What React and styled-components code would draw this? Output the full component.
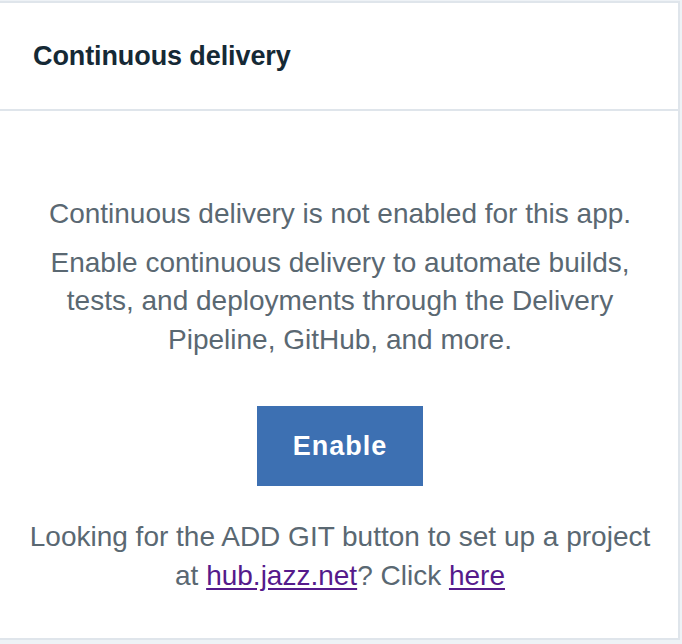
import React from 'react';
import styled, { createGlobalStyle } from 'styled-components';

const GlobalStyle = createGlobalStyle`
  html, body {
    margin: 0;
    padding: 0;
    background: #eef2f6;
  }
  body {
    font-family: "Liberation Sans", Arial, sans-serif;
    -webkit-font-smoothing: antialiased;
  }
`;

const Card = styled.section`
  box-sizing: border-box;
  width: 682px;
  margin: 1px 0 0 -2px;
  background: #fff;
  border: 2px solid #dfe5eb;
  height: 639px;
  display: flex;
  flex-direction: column;
`;

const Header = styled.header`
  box-sizing: border-box;
  height: 108px;
  display: flex;
  align-items: center;
  padding: 0 0 0 33px;
  border-bottom: 2px solid #dfe5eb;

  h2 {
    margin: 0;
    font-size: 27px;
    font-weight: 700;
    color: #152935;
    letter-spacing: -0.1px;
  }
`;

const Body = styled.div`
  padding: 84px 18px 0 20px;
  display: flex;
  flex-direction: column;
  align-items: center;
  text-align: center;
`;

const Text = styled.p`
  margin: ${({ $gap }) => $gap || 0} 0 0;
  font-size: 28px;
  line-height: 38.5px;
  color: #5a6872;
  max-width: ${({ $max }) => $max || '620px'};

  a {
    color: #551a8b;
    text-decoration: underline;
    text-underline-offset: 3px;
  }
`;

const Button = styled.button`
  margin: 47px 0 32px;
  width: 166px;
  height: 80px;
  border: none;
  background: #3d70b2;
  color: #fff;
  font-family: inherit;
  font-size: 27px;
  font-weight: 700;
  letter-spacing: 1px;
  cursor: pointer;
`;

export default function App() {
  return (
    <>
      <GlobalStyle />
      <Card>
        <Header>
          <h2>Continuous delivery</h2>
        </Header>
        <Body>
          <Text>Continuous delivery is not enabled for this app.</Text>
          <Text $gap="10px">
            Enable continuous delivery to automate builds, tests, and deployments
            through the Delivery Pipeline, GitHub, and more.
          </Text>
          <Button>Enable</Button>
          <Text $max="628px">
            Looking for the ADD GIT button to set up a project at{' '}
            <a href="#hub">hub.jazz.net</a>? Click <a href="#here">here</a>
          </Text>
        </Body>
      </Card>
    </>
  );
}
